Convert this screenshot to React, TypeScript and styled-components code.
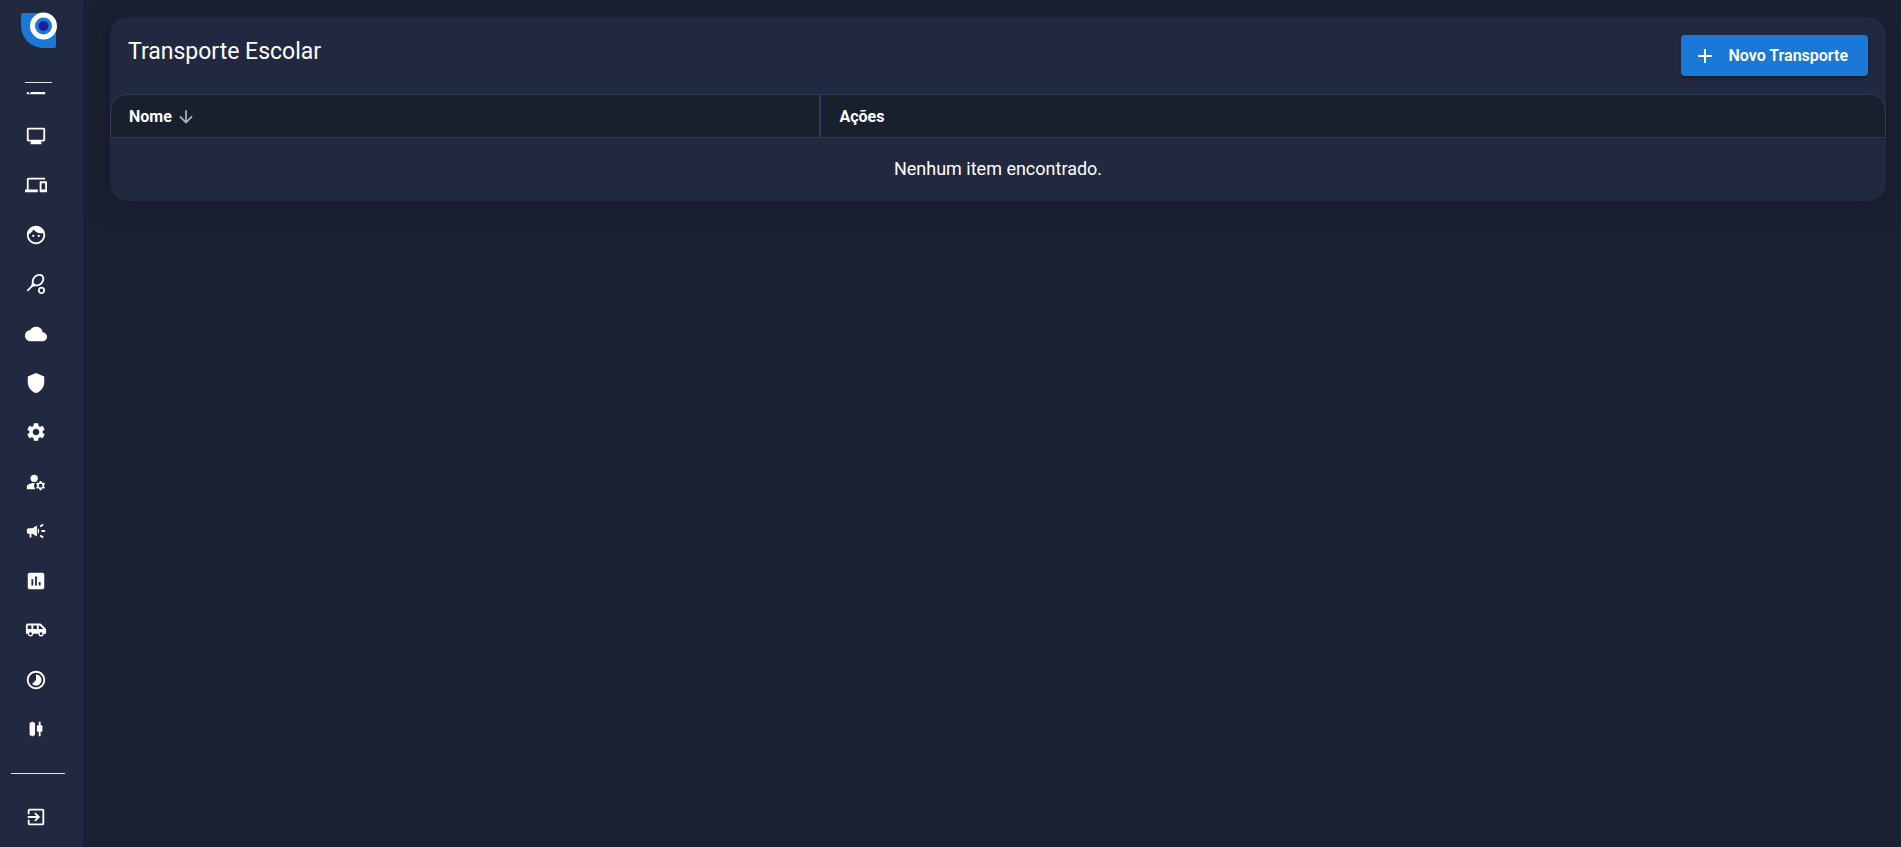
import React from "react";
import styled, { createGlobalStyle } from "styled-components";
import type { IconType } from "react-icons";
import {
  MdAdd,
  MdAirportShuttle,
  MdArrowDownward,
  MdAssessment,
  MdCampaign,
  MdCloud,
  MdDevices,
  MdExitToApp,
  MdFace,
  MdManageAccounts,
  MdMonitor,
  MdSettings,
  MdShield,
  MdSportsTennis,
  MdStorage,
  MdTimelapse,
} from "react-icons/md";

const GlobalStyle = createGlobalStyle`
  * { box-sizing: border-box; }
  body {
    margin: 0;
    background: #1b2033;
    color: #ffffff;
    font-family: Roboto, "Liberation Sans", sans-serif;
  }
`;

const Shell = styled.div`
  display: flex;
  min-height: 100vh;
`;

const Sidebar = styled.aside`
  display: flex;
  flex-direction: column;
  flex: none;
  width: 83px;
  height: 100vh;
  background: #212940;
`;

const Brand = styled.a`
  display: block;
  height: 36px;
  margin: 12px 0 0 21px;
  svg { display: block; }
`;

const Divider = styled.hr<{ $short?: boolean }>`
  flex: none;
  width: ${(p) => (p.$short ? 27 : 54)}px;
  height: 1px;
  margin: ${(p) => (p.$short ? "34px 0 9px 25px" : "19px 0 0 11px")};
  border: 0;
  background: #dfe6e0;
`;

const ScrollEdge = styled.div`
  display: flex;
  align-items: flex-end;
  flex: none;
  height: 6px;
  margin-left: 25px;
  overflow: hidden;
`;

const Nav = styled.nav`
  flex: 1;
  display: grid;
  grid-auto-rows: 1fr;
  padding-top: 13px;
`;

const NavLink = styled.a`
  display: flex;
  align-items: center;
  padding-left: 25px;
  color: #ffffff;
`;

const Footer = styled.div`
  flex: none;
  display: flex;
  height: 73px;
  padding-top: 12px;
`;

const Main = styled.main`
  flex: 1;
  min-width: 0;
  padding: 17px 15px 17px 27px;
`;

const Card = styled.section`
  border-radius: 18px;
  background: #212940;
  box-shadow: 0 4px 24px rgba(15, 18, 34, 0.5);
`;

const CardHeader = styled.header`
  display: flex;
  align-items: flex-start;
  justify-content: space-between;
  height: 77px;
  padding: 18px 18px 0;
`;

const Title = styled.h1`
  margin: 0;
  font-size: 23px;
  font-weight: 400;
  line-height: 34px;
`;

const PrimaryButton = styled.button`
  display: flex;
  align-items: center;
  gap: 11px;
  height: 41px;
  padding: 0 20px 0 12px;
  border: 0;
  border-radius: 4px;
  background: #1a78d6;
  box-shadow: 0 2px 2px rgba(15, 18, 34, 0.6);
  color: #ffffff;
  font: 600 16px/24px Roboto, "Liberation Sans", sans-serif;
`;

const Table = styled.table`
  width: 100%;
  border-collapse: separate;
  border-spacing: 0;
  table-layout: fixed;
`;

const HeadCell = styled.th<{ $width?: string }>`
  width: ${(p) => p.$width ?? "auto"};
  height: 44px;
  padding: 2px 18px 0;
  border: 1px solid #2f3a5c;
  background: #181f2d;
  font-size: 16px;
  font-weight: 700;
  line-height: 24px;
  text-align: left;
  &:first-child { border-top-left-radius: 16px; }
  &:last-child { border-top-right-radius: 16px; }
`;

const SortButton = styled.button`
  display: flex;
  align-items: center;
  gap: 4px;
  padding: 0;
  border: 0;
  background: none;
  color: inherit;
  font: inherit;
  svg { color: #b5b5b8; }
`;

const EmptyCell = styled.td`
  height: 63px;
  padding: 0 0 2px;
  font-size: 18px;
  line-height: 24px;
  text-align: center;
`;

const CandlesIcon = ({ size = 22 }: { size?: number }) => (
  <svg width={size} height={size} viewBox="0 0 24 24" fill="currentColor" aria-hidden="true">
    <path d="M9 4H7v1H5.8Q5 5 5 6v12q0 1 .8 1H7v1h2v-1h1.2q.8 0 .8-1V6q0-1-.8-1H9zM17 4h-2v4h-1.2q-.8 0-.8 1v5q0 1 .8 1H15v5h2v-5h1.200q.8 0 .8-1V9q0-1-.8-1H17z" />
  </svg>
);

const Logo = () => (
  <svg width="36" height="36" viewBox="0 0 36 36" aria-hidden="true">
    <path d="M2 1H24C31 1 35 6 35 14V34Q35 36 33 36H24C9 36 0 26 0 12V3Q0 1 2 1Z" fill="#1a78d6" />
    <circle cx="22.500" cy="14" r="11" fill="#1a78d6" stroke="#ffffff" strokeWidth="5" />
    <circle cx="22.500" cy="14" r="5" fill="#1c1f96" />
  </svg>
);

const links: { label: string; Icon: IconType | typeof CandlesIcon }[] = [
  { label: "Monitor", Icon: MdMonitor },
  { label: "Dispositivos", Icon: MdDevices },
  { label: "Alunos", Icon: MdFace },
  { label: "Esportes", Icon: MdSportsTennis },
  { label: "Nuvem", Icon: MdCloud },
  { label: "Segurança", Icon: MdShield },
  { label: "Configurações", Icon: MdSettings },
  { label: "Contas", Icon: MdManageAccounts },
  { label: "Comunicados", Icon: MdCampaign },
  { label: "Relatórios", Icon: MdAssessment },
  { label: "Transporte", Icon: MdAirportShuttle },
  { label: "Turnos", Icon: MdTimelapse },
  { label: "Indicadores", Icon: CandlesIcon },
];

export default function App() {
  return (
    <Shell>
      <GlobalStyle />
      <Sidebar>
        <Brand href="#" aria-label="Início">
          <Logo />
        </Brand>
        <Divider $short />
        <ScrollEdge>
          <MdStorage size={22} />
        </ScrollEdge>
        <Nav>
          {links.map(({ label, Icon }) => (
            <NavLink key={label} href="#" aria-label={label}>
              <Icon size={22} />
            </NavLink>
          ))}
        </Nav>
        <Divider />
        <Footer>
          <NavLink href="#" aria-label="Sair">
            <MdExitToApp size={22} />
          </NavLink>
        </Footer>
      </Sidebar>
      <Main>
        <Card>
          <CardHeader>
            <Title>Transporte Escolar</Title>
            <PrimaryButton type="button">
              <MdAdd size={24} />
              Novo Transporte
            </PrimaryButton>
          </CardHeader>
          <Table>
            <thead>
              <tr>
                <HeadCell $width="40%">
                  <SortButton type="button">
                    Nome
                    <MdArrowDownward size={20} />
                  </SortButton>
                </HeadCell>
                <HeadCell>Ações</HeadCell>
              </tr>
            </thead>
            <tbody>
              <tr>
                <EmptyCell colSpan={2}>Nenhum item encontrado.</EmptyCell>
              </tr>
            </tbody>
          </Table>
        </Card>
      </Main>
    </Shell>
  );
}
